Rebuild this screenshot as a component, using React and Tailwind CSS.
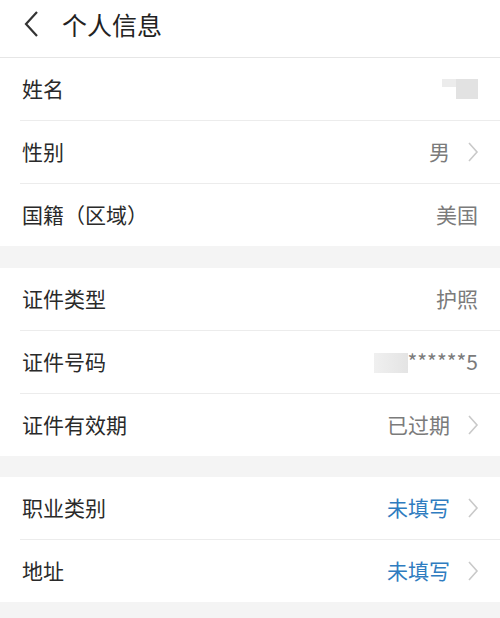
const groups = [
  [
    { label: "姓名", value: "blur-name" },
    { label: "性别", value: "男", arrow: true },
    { label: "国籍（区域）", value: "美国" },
  ],
  [
    { label: "证件类型", value: "护照" },
    { label: "证件号码", value: "blur-id" },
    { label: "证件有效期", value: "已过期", arrow: true },
  ],
  [
    { label: "职业类别", value: "未填写", arrow: true, blue: true },
    { label: "地址", value: "未填写", arrow: true, blue: true },
  ],
];

function Chevron() {
  return (
    <svg width="12" height="22" viewBox="0 0 12 22" className="ml-[17px] mr-[-1px]">
      <path d="M2 2 L10 11 L2 20" fill="none" stroke="#c9c9c9" strokeWidth="1.6" />
    </svg>
  );
}

function Value({ item }) {
  if (item.value === "blur-name") {
    return (
      <div className="relative w-[36px] h-[24px]">
        <div className="absolute left-0 top-[2px] w-[20px] h-[8px] bg-[#ececec]" />
        <div className="absolute left-[14px] top-[2px] w-[22px] h-[20px] bg-[#e2e2e2]" />
      </div>
    );
  }
  if (item.value === "blur-id") {
    return (
      <div className="flex items-center">
        <div className="w-[34px] h-[20px] bg-gradient-to-r from-[#f0f0f0] to-[#e4e4e4] mt-[2px]" />
        <span className="text-[21px] text-[#7b7b7b]">******5</span>
      </div>
    );
  }
  return (
    <span className={`text-[21px] ${item.blue ? "text-[#2f7cc0]" : "text-[#7b7b7b]"}`}>
      {item.value}
    </span>
  );
}

export default function App() {
  return (
    <div
      className="w-[500px] h-[618px] bg-[#f4f4f4] overflow-hidden"
      style={{ fontFamily: '"Noto Sans CJK SC", "Noto Sans", sans-serif' }}
    >
      <header className="h-[58px] bg-white border-b border-[#e6e6e6] flex items-center pb-[9px]">
        <svg width="20" height="28" viewBox="0 0 20 28" className="ml-[22px]">
          <path d="M15 2 L4 14 L15 26" fill="none" stroke="#333" strokeWidth="2.2" />
        </svg>
        <h1 className="ml-[20px] text-[25px] text-[#222] leading-none">个人信息</h1>
      </header>

      {groups.map((group, gi) => (
        <div key={gi} className={gi === 1 ? "mt-[22px]" : gi === 2 ? "mt-[21px]" : ""}>
          <div className="bg-white">
            {group.map((item, i) => (
              <div key={item.label}>
                {i > 0 && <div className="ml-[20px] h-px bg-[#ececec]" />}
                <div className="flex items-center justify-between px-[22px] h-[62px]">
                  <span className="text-[21px] text-[#2a2a2a]">{item.label}</span>
                  <div className="flex items-center">
                    <Value item={item} />
                    {item.arrow && <Chevron />}
                  </div>
                </div>
              </div>
            ))}
          </div>
        </div>
      ))}
    </div>
  );
}
